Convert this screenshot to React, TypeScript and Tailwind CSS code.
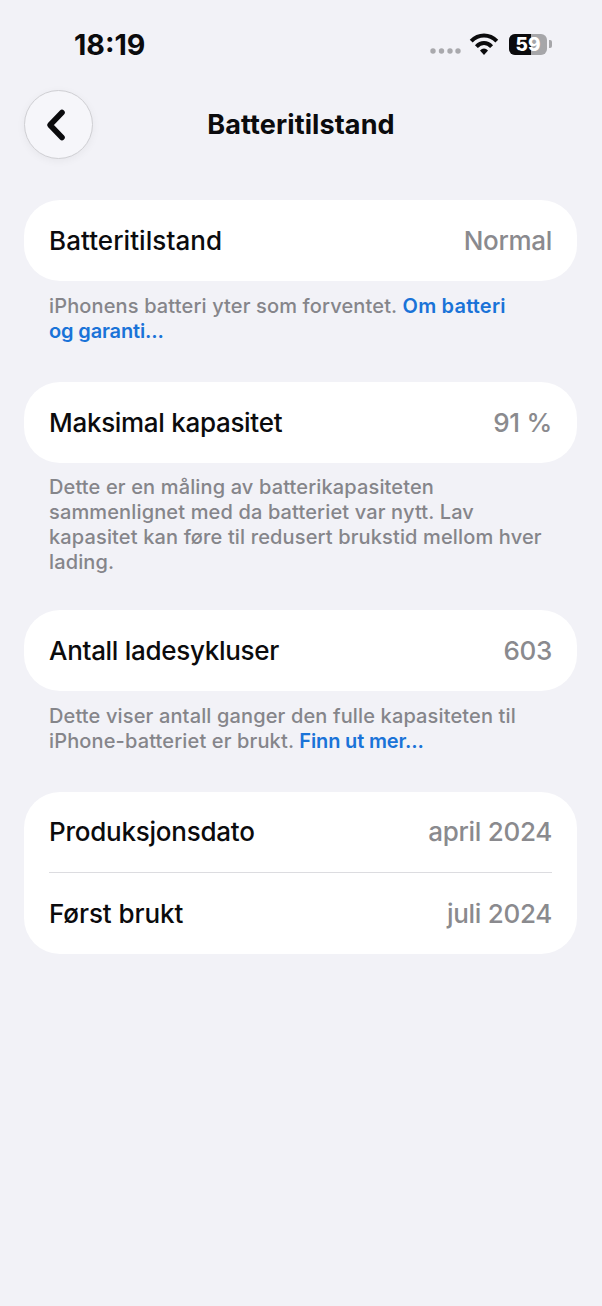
const font = { fontFamily: "Inter, 'Noto Sans', sans-serif" };

function Row({ label, value, h = "h-[81px]", track }: { label: string; value: string; h?: string; track: string }) {
  return (
    <div className={`flex items-center justify-between px-[25px] text-[26px] leading-[32px] ${h}`}>
      <span className={`font-medium text-[#0b0b0d] ${track}`}>{label}</span>
      <span className="font-medium tracking-[-0.3px] text-[#8a8a8e]">{value}</span>
    </div>
  );
}

function Card({ children }: { children: React.ReactNode }) {
  return <div className="mx-[24px] w-[553px] overflow-hidden rounded-[36px] bg-white">{children}</div>;
}

function Footer({ children, className }: { children: React.ReactNode; className: string }) {
  return (
    <p className={`mx-[49px] text-[20px] font-medium leading-[25px] tracking-[0.14px] whitespace-nowrap text-[#85858a] ${className}`}>
      {children}
    </p>
  );
}

function Link({ children, track = "tracking-[0px]" }: { children: React.ReactNode; track?: string }) {
  return <span className={`font-semibold text-[#1a73d8] ${track}`}>{children}</span>;
}

function StatusIcons() {
  return (
    <div className="flex items-center">
      <svg width="31" height="8" viewBox="0 0 31 8" className="mt-[14px]">
        <g fill="#a9a9ad">
          <circle cx="3" cy="4" r="2.7" />
          <circle cx="11.5" cy="4" r="2.7" />
          <circle cx="20" cy="4" r="2.7" />
          <circle cx="28" cy="4" r="2.7" />
        </g>
      </svg>
      <svg width="30" height="24" viewBox="0 0 30 24" className="ml-[8px]">
        <g fill="none" stroke="#0b0b0d" strokeWidth="4">
          <path d="M2.2 9.2C9.6 1.6 20.4 1.6 27.8 9.2" />
          <path d="M7.4 14.6C12 9.8 18 9.8 22.6 14.6" />
        </g>
        <path d="M11 18.6C13.4 15.8 16.6 15.8 19 18.6L15 23Z" fill="#0b0b0d" />
      </svg>
      <div className="relative ml-[10px] flex h-[21px] w-[38px] overflow-hidden rounded-[6px] bg-[#a6a6a9]">
        <div className="h-full w-[22px] bg-[#0b0b0d]" />
        <span className="absolute inset-0 flex items-center justify-center text-[19px] leading-none font-extrabold text-white">59</span>
      </div>
      <div className="ml-[2px] h-[8px] w-[3px] rounded-r-[2px] bg-[#a6a6a9]" />
    </div>
  );
}

export default function App() {
  return (
    <div style={font} className="h-[1306px] w-[602px] overflow-hidden bg-[#f2f2f7]">
      <div className="flex h-[90px] items-start justify-between pt-[27px] pr-[50px] pl-[74px]">
        <span className="text-[28.6px] leading-[35px] font-bold text-[#0b0b0d]">18:19</span>
        <div className="mt-[5px]"><StatusIcons /></div>
      </div>

      <div className="relative flex h-[69px] items-center justify-center">
        <div className="absolute top-0 left-[24px] flex h-[69px] w-[69px] items-center justify-center rounded-full border border-[#cfcfd3] bg-[#f6f6fa] shadow-[0_2px_8px_rgba(0,0,0,0.05)]">
          <svg width="24" height="34" viewBox="0 0 24 34" className="mr-[5px]">
            <path d="M18 4.5L6 17L18 29.5" fill="none" stroke="#0b0b0d" strokeWidth="5.6" strokeLinecap="round" strokeLinejoin="round" />
          </svg>
        </div>
        <span className="pt-[1px] text-[27px] font-bold tracking-[0.1px] text-[#0b0b0d]">Batteritilstand</span>
      </div>

      <div className="mt-[41px]">
        <Card><Row label="Batteritilstand" value="Normal" track="tracking-[0.06px]" /></Card>
        <Footer className="mt-[13px]">
          iPhonens batteri yter som forventet. <Link track="tracking-[0.2px]">Om batteri</Link>
          <br />
          <Link track="tracking-[-0.15px]">og garanti...</Link>
        </Footer>
      </div>

      <div className="mt-[38px]">
        <Card><Row label="Maksimal kapasitet" value="91 %" track="tracking-[-0.3px]" /></Card>
        <Footer className="mt-[12px]">
          Dette er en måling av batterikapasiteten
          <br />
          sammenlignet med da batteriet var nytt. Lav
          <br />
          kapasitet kan føre til redusert brukstid mellom hver
          <br />
          lading.
        </Footer>
      </div>

      <div className="mt-[35px]">
        <Card><Row label="Antall ladesykluser" value="603" track="tracking-[-0.3px]" /></Card>
        <Footer className="mt-[13px]">
          Dette viser antall ganger den fulle kapasiteten til
          <br />
          iPhone-batteriet er brukt. <Link track="tracking-[-0.15px]">Finn ut mer...</Link>
        </Footer>
      </div>

      <div className="mt-[38px]">
        <Card>
          <Row label="Produksjonsdato" value="april 2024" h="h-[80px]" track="tracking-[-0.24px]" />
          <div className="mx-[25px] h-px bg-[#dcdce0]" />
          <Row label="Først brukt" value="juli 2024" track="tracking-[-0.08px]" />
        </Card>
      </div>
    </div>
  );
}
